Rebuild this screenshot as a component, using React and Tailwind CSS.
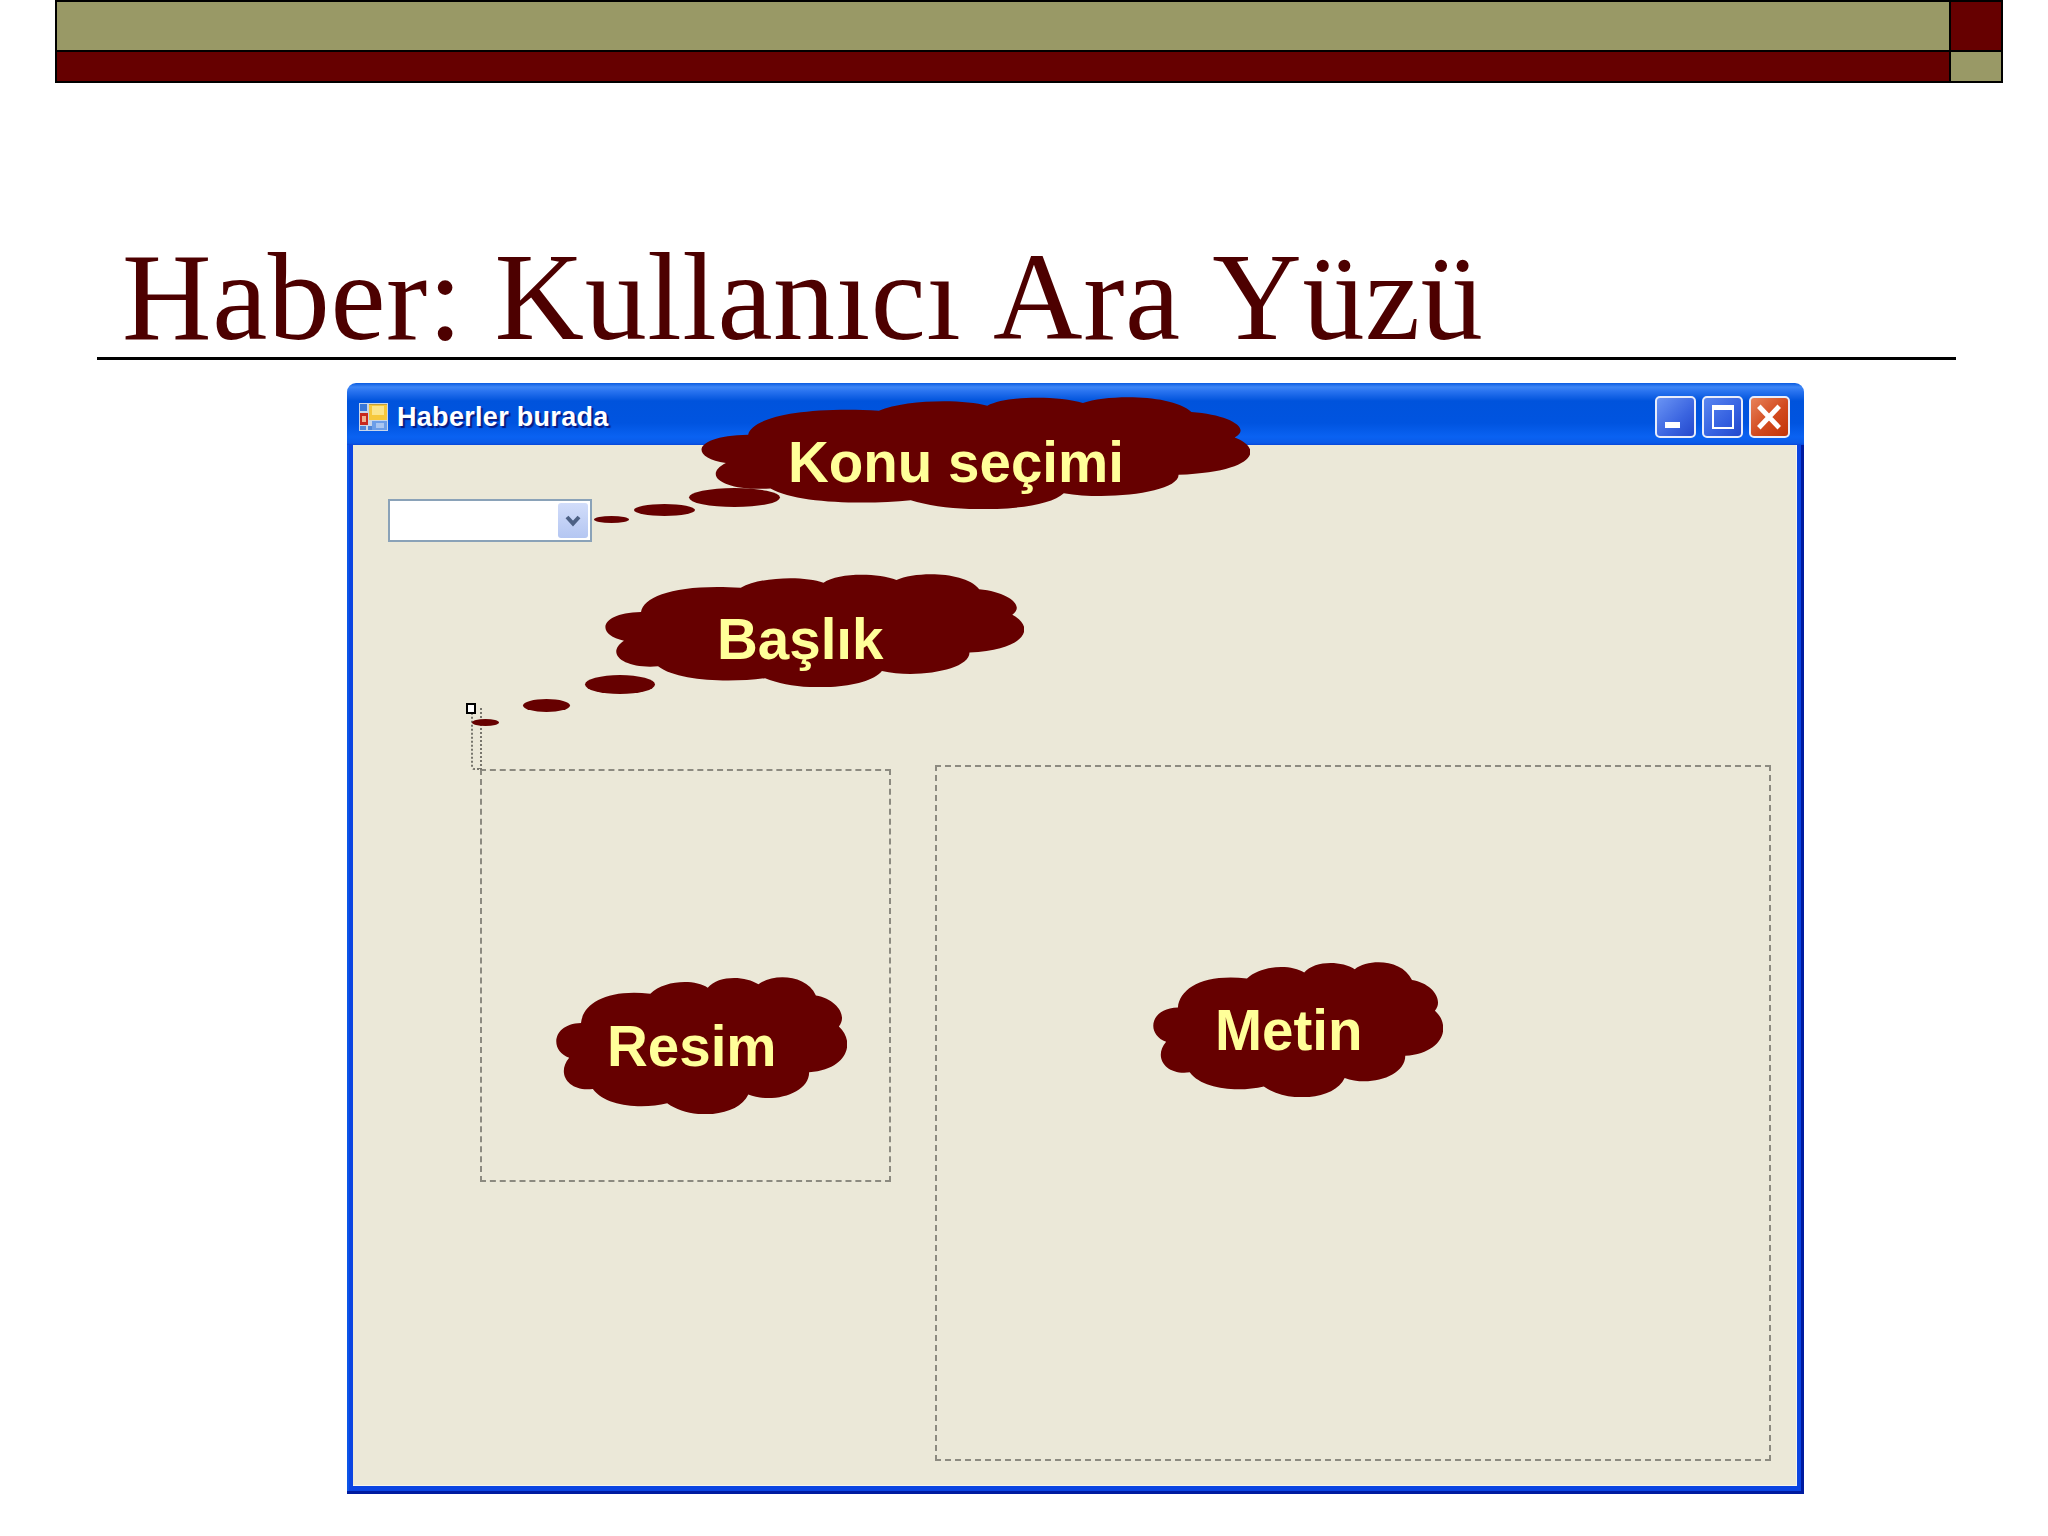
const CLOUD_PATH =
  'M155 188 C160 130 230 85 360 100 C400 60 490 55 530 82 C560 45 640 45 680 72 C720 40 820 40 850 105 C910 115 945 165 918 198 C965 240 950 325 830 335 C830 400 720 430 650 402 C620 470 480 480 410 428 C340 445 230 440 190 385 C120 395 80 340 120 292 C60 270 70 190 155 188Z';

function Cloud({ className, textClass, label }) {
  return (
    <div className={`absolute ${className}`}>
      <svg viewBox="81 50 861 410" preserveAspectRatio="none" className="w-full h-full">
        <path d={CLOUD_PATH} fill="#660000" />
      </svg>
      <span className={`absolute whitespace-nowrap font-bold text-[56.5px] leading-[56px] text-[#ffff99] ${textClass}`}>
        {label}
      </span>
    </div>
  );
}

function Blob({ className }) {
  return <div className={`absolute rounded-[50%] bg-[#660000] ${className}`} />;
}

function WindowIcon() {
  return (
    <svg width="29" height="28" viewBox="0 0 29 28">
      <rect width="29" height="28" fill="#c8d6ea" />
      <rect x="1" y="1" width="7" height="7" fill="#3a78d8" />
      <rect x="10" y="1" width="18" height="3" fill="#c0a040" />
      <rect x="10" y="2" width="18" height="15" fill="#f6c83c" />
      <rect x="13" y="3" width="12" height="9" fill="#fbe58a" />
      <rect x="1" y="10" width="8" height="12" fill="#c8281e" />
      <rect x="3" y="13" width="4" height="6" fill="#f0b090" />
      <rect x="1" y="23" width="6" height="4" fill="#4f86d8" />
      <rect x="9" y="23" width="6" height="4" fill="#4f86d8" />
      <rect x="13" y="18" width="15" height="9" fill="#6c9ee8" />
      <rect x="17" y="20" width="8" height="5" fill="#a9c6f2" />
    </svg>
  );
}

function TitleButton({ className, children }) {
  return (
    <div className={`w-[41px] h-[42px] rounded-[5px] border-2 border-[#e8edfb] relative overflow-hidden ${className}`}>
      {children}
    </div>
  );
}

export default function App() {
  return (
    <div className="w-[2048px] h-[1536px] bg-white overflow-hidden font-['Liberation_Sans',sans-serif]">
      {/* Slide header bars */}
      <div className="ml-[55px] w-[1948px] h-[83px] grid grid-cols-[1fr_54px] grid-rows-[52px_31px]">
        <div className="bg-[#999966] border-2 border-black border-r-0" />
        <div className="bg-[#660000] border-2 border-black" />
        <div className="bg-[#660000] border-2 border-t-0 border-black border-r-0" />
        <div className="bg-[#999966] border-2 border-t-0 border-black" />
      </div>

      {/* Slide title */}
      <h1 className="mt-[153px] ml-[97px] w-[1859px] h-[124px] pl-[25px] border-b-[3px] border-black font-['Liberation_Serif',serif] font-normal text-[124px] leading-[124px] tracking-[0.6px] [font-kerning:none] text-[#4d0000] whitespace-nowrap">
        Haber: Kullanıcı Ara Yüzü
      </h1>

      {/* Form window */}
      <div className="relative mt-[23px] ml-[347px] w-[1457px] h-[1111px] flex flex-col">
        <div className="h-[62px] shrink-0 rounded-t-[9px] flex items-center pl-[12px] pr-[14px] pt-[5px] bg-[linear-gradient(to_bottom,#0a5ce0_0px,#3d86f6_4px,#2a74f0_8px,#0053dc_18px,#0054e0_40px,#0a62f2_54px,#0a5ae8_60px,#0846d8_62px)]">
          <WindowIcon />
          <span className="ml-[9px] text-[27px] leading-[30px] font-bold tracking-[0.3px] text-white [text-shadow:2px_2px_1px_#0a1a80]">
            Haberler burada
          </span>
          <div className="ml-auto flex gap-[6px]">
            <TitleButton className="bg-[linear-gradient(135deg,#6a94f4,#3a64e0_60%,#2448cc)]">
              <div className="absolute left-[8px] top-[24px] w-[15px] h-[6px] bg-white" />
            </TitleButton>
            <TitleButton className="bg-[linear-gradient(135deg,#5a86f0,#3460e0_60%,#2448cc)]">
              <div className="absolute left-[8px] top-[7px] w-[22px] h-[24px] border-2 border-t-[5px] border-white" />
            </TitleButton>
            <TitleButton className="bg-[linear-gradient(135deg,#e8825a,#d24a1e_55%,#c23408)]">
              <svg viewBox="0 0 38 38" className="w-full h-full">
                <path d="M8 8 L29 30 M29 8 L8 30" stroke="#fff" strokeWidth="5" fill="none" />
              </svg>
            </TitleButton>
          </div>
        </div>

        <div className="flex-1 pl-[6px] pr-[7px] pb-[8px] bg-[#0a44e2] shadow-[inset_-3px_-3px_0_#001ba0,inset_2px_0_0_#0a55e8] flex">
          <div className="flex-1 bg-[#ebe8d8] border-b border-r border-[#f6f5ee]">
            {/* Combo box */}
            <div className="mt-[54px] ml-[35px] w-[204px] h-[43px] border-2 border-[#8aa2b8] bg-white flex justify-end items-center pr-[2px]">
              <div className="w-[30px] h-[35px] rounded-[3px] bg-[linear-gradient(to_bottom,#d2ddfa,#b4c6f2)] flex items-center justify-center">
                <svg width="18" height="14" viewBox="0 0 18 14">
                  <path d="M3 3 L9 9.5 L15 3" stroke="#4d6185" strokeWidth="4" fill="none" />
                </svg>
              </div>
            </div>

            {/* Picture and text areas */}
            <div className="mt-[223px] pl-[127px] flex items-start gap-[44px]">
              <div className="mt-[4px] w-[411px] h-[413px] border-2 border-dashed border-[#8c8a80]" />
              <div className="w-[836px] h-[696px] border-2 border-dashed border-[#8c8a80]" />
            </div>
          </div>
        </div>

        {/* Selected control marker */}
        <div className="absolute left-[124px] top-[325px] w-[11px] h-[62px] border-2 border-t-0 border-dotted border-[#77756c] rounded-bl-[3px]" />
        <div className="absolute left-[119px] top-[320px] w-[10px] h-[11px] border-2 border-black bg-white" />

        {/* Callouts */}
        <Blob className="left-[342px] top-[105px] w-[91px] h-[19px]" />
        <Blob className="left-[287px] top-[121px] w-[61px] h-[12px]" />
        <Blob className="left-[247px] top-[133px] w-[35px] h-[7px]" />
        <Cloud className="left-[354px] top-[14px] w-[549px] h-[112px]" textClass="left-[87px] top-[38px]" label="Konu seçimi" />

        <Blob className="left-[238px] top-[292px] w-[70px] h-[19px]" />
        <Blob className="left-[176px] top-[316px] w-[47px] h-[13px]" />
        <Blob className="left-[125px] top-[336px] w-[27px] h-[7px]" />
        <Cloud className="left-[258px] top-[191px] w-[419px] h-[113px]" textClass="left-[112px] top-[38px]" label="Başlık" />

        <Cloud className="left-[209px] top-[594px] w-[291px] h-[137px]" textClass="left-[51px] top-[42px]" label="Resim" />
        <Cloud className="left-[806px] top-[579px] w-[290px] h-[135px]" textClass="left-[62px] top-[41px]" label="Metin" />
      </div>
    </div>
  );
}
